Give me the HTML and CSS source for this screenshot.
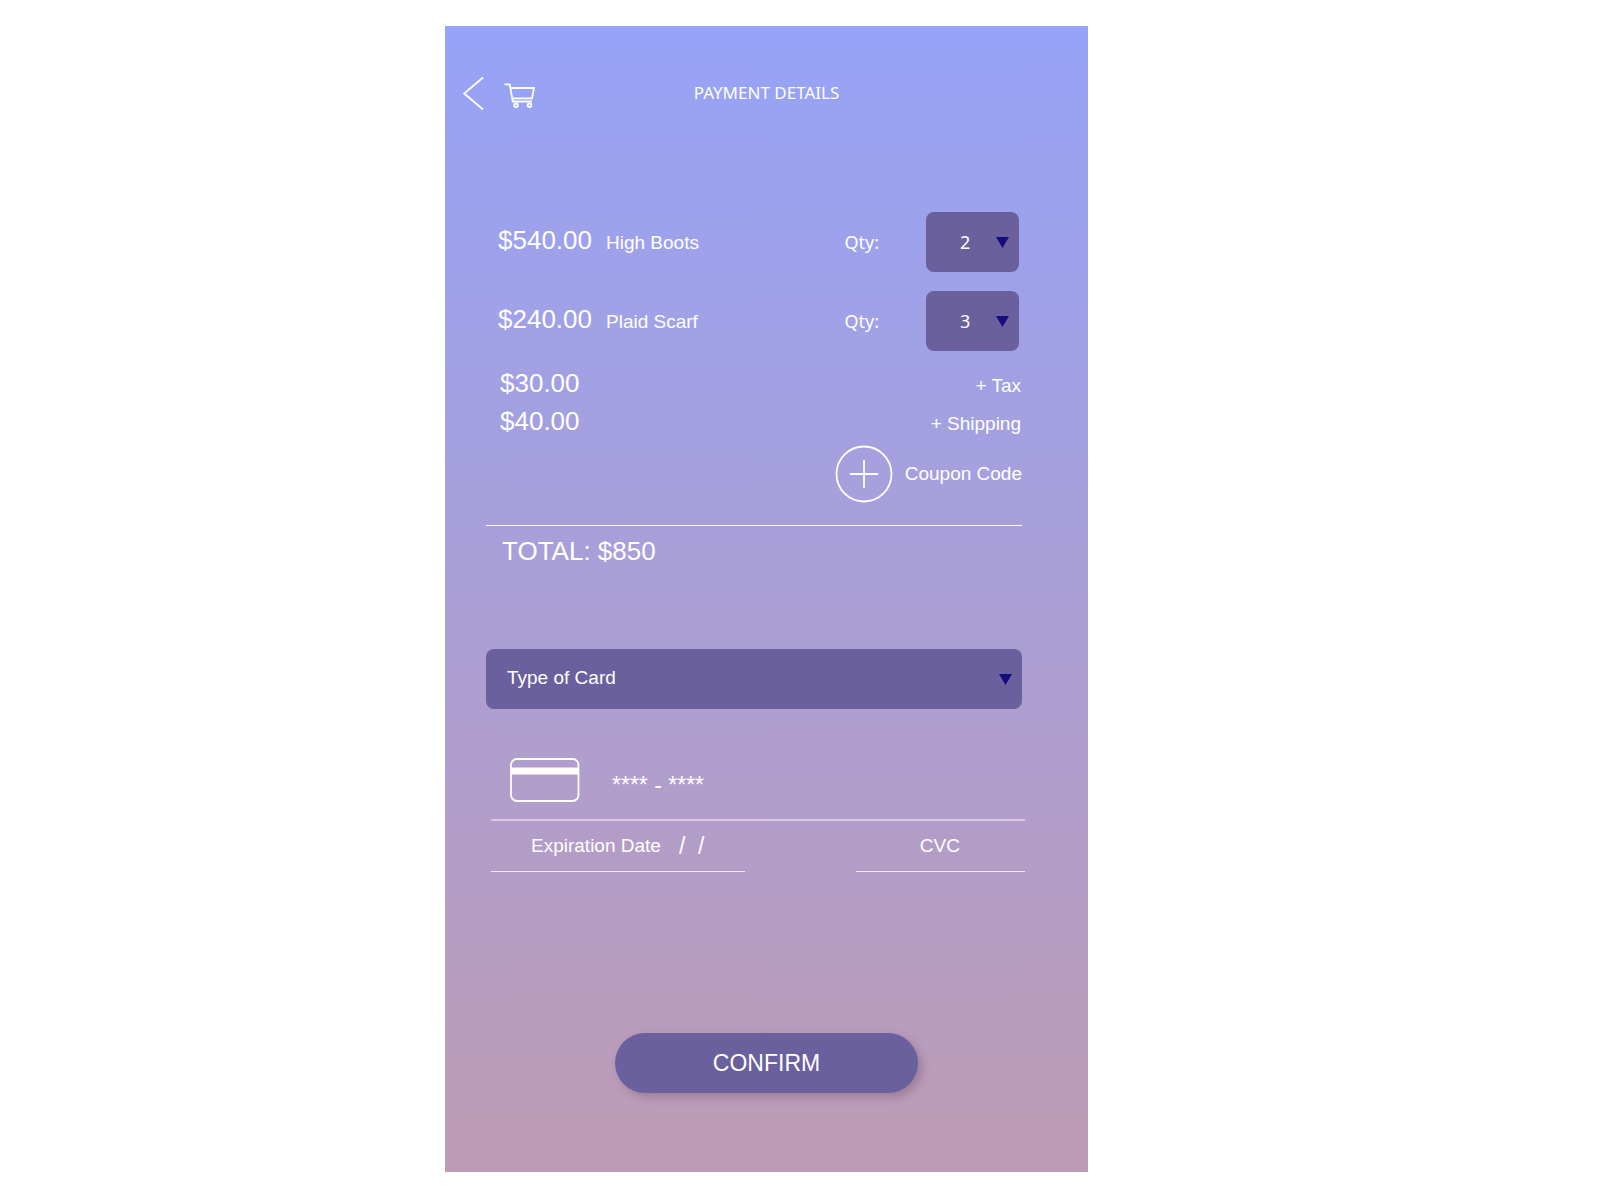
FILE: index.html
```html
<!DOCTYPE html>
<html lang="en">
<head>
    <meta charset="UTF-8">
    <meta name="viewport" content="width=device-width, initial-scale=1.0">
    <title>Payment Details</title>
    <link rel="stylesheet" href="styles.css">
</head>
<body>
    <main class="screen">
        <header class="header">
            <nav class="nav">
                <a href="#" aria-label="Back">
                    <svg class="icon" width="22" height="34" viewBox="0 0 22 34">
                        <path d="M20 1.500 L1.200 17.500 L20 33.500"/>
                    </svg>
                </a>
                <a href="#" aria-label="Cart">
                    <svg class="icon" width="32" height="34" viewBox="0 0 32 34">
                        <path d="M1.500 8.300 H6.700 L9.800 25.500 H29 M7.800 12 H31 L29 22.300 H9.300"/>
                        <circle cx="13" cy="29.300" r="1.800"/>
                        <circle cx="26.500" cy="29.300" r="1.800"/>
                    </svg>
                </a>
            </nav>
            <h1>PAYMENT DETAILS</h1>
        </header>

        <form>
            <div class="details">
                <div class="items">
                    <div class="item">
                        <span class="price">$540.00</span>
                        <span class="name">High Boots</span>
                        <label class="qty" for="qtyBoots">Qty:</label>
                        <div class="select">
                            <select id="qtyBoots">
                                <option>1</option>
                                <option selected>2</option>
                                <option>3</option>
                            </select>
                            <svg class="arrow" width="13" height="11" viewBox="0 0 13 11"><path d="M0 0 H13 L6.500 11 Z"/></svg>
                        </div>
                    </div>
                    <div class="item">
                        <span class="price">$240.00</span>
                        <span class="name">Plaid Scarf</span>
                        <label class="qty" for="qtyScarf">Qty:</label>
                        <div class="select">
                            <select id="qtyScarf">
                                <option>1</option>
                                <option>2</option>
                                <option selected>3</option>
                            </select>
                            <svg class="arrow" width="13" height="11" viewBox="0 0 13 11"><path d="M0 0 H13 L6.500 11 Z"/></svg>
                        </div>
                    </div>
                </div>

                <div class="fees">
                    <div class="fee"><span class="price">$30.00</span><span>+ Tax</span></div>
                    <div class="fee"><span class="price">$40.00</span><span>+ Shipping</span></div>
                </div>

                <button type="button" class="coupon">
                    <svg class="icon" width="58" height="58" viewBox="0 0 58 58">
                        <circle cx="29" cy="29" r="27.500"/>
                        <path d="M15 29 H43 M29 15 V43"/>
                    </svg>
                    Coupon Code
                </button>

                <p class="total">TOTAL: $850</p>

                <div class="select card-type">
                    <select id="cardType" aria-label="Type of Card">
                        <option>Type of Card</option>
                        <option>Visa</option>
                        <option>Mastercard</option>
                    </select>
                    <svg class="arrow" width="13" height="11" viewBox="0 0 13 11"><path d="M0 0 H13 L6.500 11 Z"/></svg>
                </div>

                <div class="payment">
                    <div class="card-number">
                        <svg class="icon" width="70" height="44" viewBox="0 0 70 44">
                            <rect x="1" y="1" width="67.500" height="42" rx="6"/>
                            <path class="stripe" d="M1 13 H69"/>
                        </svg>
                        <input type="text" id="cardNumber" aria-label="Card number" placeholder="**** - ****">
                    </div>
                    <div class="fields">
                        <div class="field expiration">
                            <label for="expiration">Expiration Date</label>
                            <input type="text" id="expiration" placeholder="/  /">
                        </div>
                        <div class="field cvc">
                            <input type="text" id="cvc" aria-label="CVC" placeholder="CVC">
                        </div>
                    </div>
                </div>
            </div>

            <button type="submit" class="confirm">CONFIRM</button>
        </form>
    </main>
</body>
</html>
```
FILE: styles.css
```css
* {
    box-sizing: border-box;
}
body {
    margin: 0;
    padding: 26px 67px 27px 0;
    background: #fff;
    font-family: "Liberation Sans", Arial, sans-serif;
    font-size: 19px;
    color: #fff;
}
.screen {
    max-width: 643px;
    margin: 0 auto;
    padding: 50px 0 79px;
    background: linear-gradient(#96a3f8, #be9bb4);
}
a {
    display: flex;
}
input, select, button {
    font: inherit;
    color: inherit;
    background: none;
    border: none;
    margin: 0;
    padding: 0;
}
button {
    cursor: pointer;
}
.icon {
    fill: none;
    stroke: #fff;
    stroke-width: 1.8;
}

/* Header */
.header {
    display: grid;
    grid-template-columns: 1fr auto 1fr;
    align-items: center;
    padding: 0 18px;
}
.nav {
    display: flex;
    gap: 18px;
}
h1 {
    margin: 0;
    font-family: "Noto Sans", sans-serif;
    font-size: 17px;
    line-height: 24px;
    font-weight: normal;
}

/* Order */
.details {
    padding: 102px 66px 0 41px;
}
.items {
    display: grid;
    gap: 19px;
    padding: 0 3px 0 12px;
}
.item {
    display: flex;
    align-items: baseline;
    gap: 14px;
}
.price {
    font-size: 26px;
}
.qty {
    margin-left: auto;
    margin-right: 33px;
    font-family: "Noto Sans", sans-serif;
    font-size: 18px;
}
.select {
    display: grid;
    align-items: center;
    width: 93px;
}
.select select {
    grid-area: 1 / 1;
    appearance: none;
    width: 100%;
    height: 60px;
    padding: 0 34px;
    border-radius: 8px;
    background: #6b609e;
    font-family: "Noto Sans", sans-serif;
    font-size: 18px;
}
.arrow {
    grid-area: 1 / 1;
    justify-self: end;
    margin-right: 10px;
    fill: #170c7c;
    pointer-events: none;
}
.fees {
    padding: 13px 1px 0 14px;
}
.fee {
    display: flex;
    justify-content: space-between;
    align-items: baseline;
    height: 38px;
    line-height: 38px;
}
.coupon {
    display: flex;
    align-items: center;
    gap: 12px;
    margin: 5px 0 0 auto;
}
.total {
    margin: 22px 0 79px;
    padding: 6px 16px 0;
    border-top: 1px solid #fff;
    font-size: 26px;
    line-height: 38px;
}

/* Card */
.card-type {
    width: 100%;
}
.card-type select {
    padding: 0 21px 4px;
    font-family: inherit;
    font-size: 19px;
}
.payment {
    margin: 49px -3px 0 5px;
}
.card-number {
    display: flex;
    align-items: center;
    gap: 32px;
    padding: 0 19px 17px;
    border-bottom: 2px solid #d9c9e6;
}
.card-number input {
    flex: 1;
    min-width: 0;
    padding-top: 10px;
    font-size: 23px;
}
.stripe {
    stroke-width: 7;
}
.fields {
    display: grid;
    grid-template-columns: 3fr 2fr;
    gap: 111px;
}
.field {
    display: flex;
    align-items: center;
    min-width: 0;
    height: 51px;
    border-bottom: 1px solid #f0e8f4;
}
.field input {
    width: 100%;
    min-width: 0;
}
.expiration {
    gap: 18px;
    padding-left: 40px;
    white-space: nowrap;
}
.expiration input {
    font-size: 23px;
}
.cvc {
    padding-left: 64px;
}
input::placeholder {
    color: #fff;
    opacity: 1;
}
.confirm {
    display: block;
    width: 100%;
    max-width: 303px;
    height: 60px;
    margin: 161px auto 0;
    border-radius: 30px;
    background: #6b609e;
    box-shadow: 4px 4px 8px rgba(80, 60, 80, 0.3);
    font-size: 23px;
}
```
